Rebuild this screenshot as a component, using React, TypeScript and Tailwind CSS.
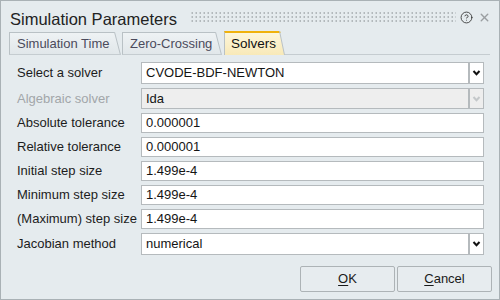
import { CircleHelp, X } from "lucide-react";

const FONT = "font-['Liberation_Sans',Arial,sans-serif]";

type Row = {
  label: string;
  value: string;
  kind: "select" | "input";
  disabled?: boolean;
  h: string;
};

const rows: Row[] = [
  { label: "Select a solver", value: "CVODE-BDF-NEWTON", kind: "select", h: "h-[22px]" },
  { label: "Algebraic solver", value: "Ida", kind: "select", disabled: true, h: "h-[21px]" },
  { label: "Absolute tolerance", value: "0.000001", kind: "input", h: "h-[20px]" },
  { label: "Relative tolerance", value: "0.000001", kind: "input", h: "h-[20px]" },
  { label: "Initial step size", value: "1.499e-4", kind: "input", h: "h-[20px]" },
  { label: "Minimum step size", value: "1.499e-4", kind: "input", h: "h-[20px]" },
  { label: "(Maximum) step size", value: "1.499e-4", kind: "input", h: "h-[20px]" },
  { label: "Jacobian method", value: "numerical", kind: "select", h: "h-[22px]" },
];

function Chevron({ disabled }: { disabled?: boolean }) {
  return (
    <svg width="9" height="6" viewBox="0 0 9 6">
      <polyline
        points="1.5,1 4.5,4.2 7.5,1"
        fill="none"
        stroke={disabled ? "#c4c8ca" : "#111"}
        strokeWidth="2"
      />
    </svg>
  );
}

// slanted right edge of a tab
function TabEdge({ active }: { active?: boolean }) {
  const h = active ? 24 : 23;
  const w = active ? 6 : 7;
  const id = active ? "tabA" : "tabI";
  return (
    <svg width={w} height={h} viewBox={`0 0 ${w} ${h}`} className="block">
      <defs>
        <linearGradient id={id} x1="0" y1="0" x2="0" y2="1">
          <stop offset="0" stopColor={active ? "#fdf6da" : "#eef2f4"} />
          <stop offset="1" stopColor={active ? "#f8e9b8" : "#e1e7ea"} />
        </linearGradient>
      </defs>
      <polygon points={`0,0 0.5,0 ${w - 0.5},${h} 0,${h}`} fill={`url(#${id})`} />
      {active && <polygon points="0,0 1,0 1.6,2 0,2" fill="#f0b20c" />}
      <line x1="0.5" y1="0" x2={w - 0.5} y2={h} stroke="#b9c1c5" strokeWidth="1" />
      {!active && <line x1="0" y1={h - 0.5} x2={w} y2={h - 0.5} stroke="#c5ccd0" strokeWidth="1" />}
    </svg>
  );
}

function Tab({ label, width, active }: { label: string; width: string; active?: boolean }) {
  return (
    <div className="flex items-end">
      <div
        className={`${width} flex items-center border-l border-[#b9c1c5] ${
          active
            ? "h-[24px] pl-[6px] border-t-2 border-t-[#f0b20c] bg-linear-to-b from-[#fdf6da] to-[#f8e9b8] text-[13.5px] text-[#111]"
            : "h-[23px] pl-[7px] border-t border-b border-b-[#c5ccd0] bg-linear-to-b from-[#eef2f4] to-[#e1e7ea] text-[13px] text-[#4b4b5c]"
        }`}
      >
        {label}
      </div>
      <TabEdge active={active} />
    </div>
  );
}

export default function App() {
  return (
    <div className={`${FONT} w-[500px] h-[300px] border border-[#a9b1b5] bg-[#e5ebee] flex flex-col`}>
      {/* Title bar */}
      <div className="h-[30px] flex items-center pl-[9px] pr-[8px] pt-[2px]">
        <span className="pt-[4px] text-[16.5px] text-[#222] leading-none">Simulation Parameters</span>
        <svg className="flex-1 h-[11px] ml-[14px] mr-[3px]">
          <defs>
            <pattern id="dots" width="4" height="4" patternUnits="userSpaceOnUse">
              <rect x="0.5" y="0" width="1.5" height="2" fill="#b3b9bc" />
            </pattern>
          </defs>
          <rect width="100%" height="11" fill="url(#dots)" />
        </svg>
        <CircleHelp size={13} strokeWidth={1.6} className="text-[#333] ml-[1px]" />
        <X size={13} strokeWidth={2.6} className="text-[#9a9ea1] ml-[5px]" />
      </div>

      {/* Tabs */}
      <div className="h-[24px] flex items-end pl-[8px] pr-[9px]">
        <Tab label="Simulation Time" width="w-[105px]" />
        <div className="ml-[1px]">
          <Tab label="Zero-Crossing" width="w-[93px]" />
        </div>
        <div className="ml-[2px]">
          <Tab label="Solvers" width="w-[55px]" active />
        </div>
        <div className="flex-1 h-[1px] bg-[#c5ccd0]" />
      </div>

      {/* Fields */}
      <div className="flex flex-col gap-[4px] pt-[7px] pl-[16px]">
        {rows.map((r) => (
          <div key={r.label} className={`flex items-center ${r.h}`}>
            <div className={`w-[124px] text-[13px] ${r.disabled ? "text-[#a2a6a9]" : "text-[#1c1c1c]"}`}>
              {r.label}
            </div>
            {r.kind === "input" ? (
              <div className="w-[343px] h-full flex items-center pl-[4px] border border-[#b5babd] bg-white text-[13px] text-[#141414]">
                {r.value}
              </div>
            ) : (
              <div className="flex h-full">
                <div
                  className={`w-[328px] h-full flex items-center pl-[4px] border border-[#b5babd] text-[13px] text-[#141414] ${
                    r.disabled ? "bg-[#eeeeee]" : "bg-white"
                  }`}
                >
                  {r.value}
                </div>
                <div
                  className={`w-[15px] h-full flex items-center justify-center border border-[#b5babd] ${
                    r.disabled ? "bg-[#eeeeee]" : "bg-white"
                  }`}
                >
                  <Chevron disabled={r.disabled} />
                </div>
              </div>
            )}
          </div>
        ))}
      </div>

      {/* Buttons */}
      <div className="mt-auto flex justify-end gap-[2px] pr-[7px] pb-[7px]">
        <button className="w-[95px] h-[26px] border border-[#adb3b6] rounded-[2px] bg-[#e7ecef] text-[13px] text-[#1a1a1a]">
          <span className="underline underline-offset-2">O</span>K
        </button>
        <button className="w-[95px] h-[26px] border border-[#adb3b6] rounded-[2px] bg-[#e7ecef] text-[13px] text-[#1a1a1a]">
          <span className="underline underline-offset-2">C</span>ancel
        </button>
      </div>
    </div>
  );
}
